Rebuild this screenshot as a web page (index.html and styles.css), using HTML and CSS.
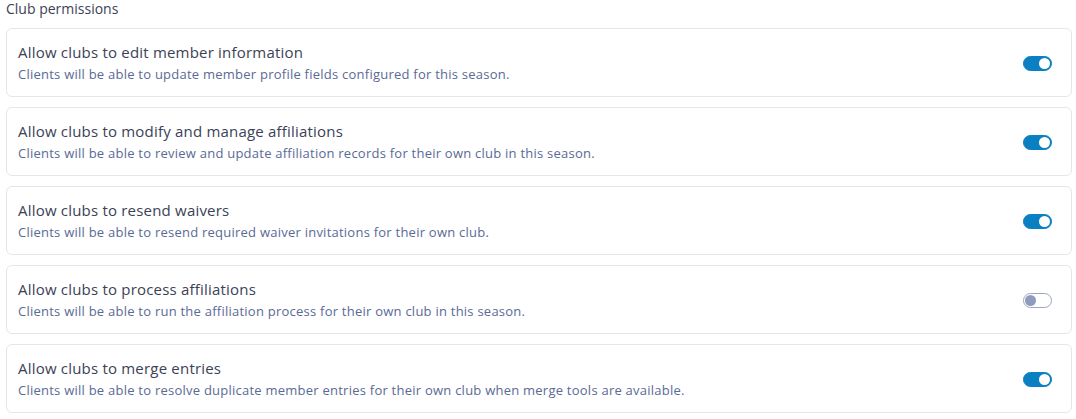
FILE: index.html
```html
<!DOCTYPE html>
<html lang="en">
<head>
  <meta charset="UTF-8" />
  <title>Club permissions</title>
  <link rel="stylesheet" href="styles.css">
</head>
<body>

  <section class="permissions">
    <h2 class="section-title">Club permissions</h2>

    <div class="perm-card">
      <div class="perm-text">
        <h3>Allow clubs to edit member information</h3>
        <p>Clients will be able to update member profile fields configured for this season.</p>
      </div>
      <label class="switch"><input type="checkbox" checked><span class="slider"></span></label>
    </div>

    <div class="perm-card">
      <div class="perm-text">
        <h3>Allow clubs to modify and manage affiliations</h3>
        <p>Clients will be able to review and update affiliation records for their own club in this season.</p>
      </div>
      <label class="switch"><input type="checkbox" checked><span class="slider"></span></label>
    </div>

    <div class="perm-card">
      <div class="perm-text">
        <h3>Allow clubs to resend waivers</h3>
        <p>Clients will be able to resend required waiver invitations for their own club.</p>
      </div>
      <label class="switch"><input type="checkbox" checked><span class="slider"></span></label>
    </div>

    <div class="perm-card">
      <div class="perm-text">
        <h3>Allow clubs to process affiliations</h3>
        <p>Clients will be able to run the affiliation process for their own club in this season.</p>
      </div>
      <label class="switch"><input type="checkbox"><span class="slider"></span></label>
    </div>

    <div class="perm-card">
      <div class="perm-text">
        <h3>Allow clubs to merge entries</h3>
        <p>Clients will be able to resolve duplicate member entries for their own club when merge tools are available.</p>
      </div>
      <label class="switch"><input type="checkbox" checked><span class="slider"></span></label>
    </div>
  </section>

</body>
</html>
```
FILE: styles.css
```css
/* Basic Reset */
* {
  margin: 0;
  padding: 0;
  box-sizing: border-box;
}

body {
  font-family: "Open Sans", Lato, sans-serif;
  background-color: #ffffff;
  color: #3b4256;
  padding: 0 4px 0 6px;
}

/* Section */
.permissions {
  display: flex;
  flex-direction: column;
  gap: 10px;
}

.section-title {
  font-size: 14px;
  font-weight: 400;
  line-height: 18px;
  color: #3b4256;
}

/* Permission cards */
.perm-card {
  display: flex;
  align-items: center;
  justify-content: space-between;
  border: 1px solid #e4e6eb;
  border-radius: 6px;
  padding: 13px 19px 12px 11px;
  height: 69px;
}

.perm-text h3 {
  font-size: 15px;
  font-weight: 400;
  line-height: 20px;
  letter-spacing: 0.2px;
  color: #3b4256;
}

.perm-text p {
  font-size: 13px;
  line-height: 22px;
  margin-top: 1px;
  letter-spacing: 0.24px;
  color: #5a6a96;
}

/* Toggle switch */
.switch {
  position: relative;
  display: inline-block;
  width: 29px;
  height: 15px;
  flex-shrink: 0;
}

.switch input {
  display: none;
}

.slider {
  position: absolute;
  inset: 0;
  border-radius: 8px;
  background-color: #ffffff;
  border: 1px solid #9ba5c2;
  cursor: pointer;
}

.slider::before {
  content: "";
  position: absolute;
  top: 1px;
  left: 1px;
  width: 11px;
  height: 11px;
  border-radius: 50%;
  background-color: #8f9bbd;
}

.switch input:checked + .slider {
  background-color: #0a7fc2;
  border-color: #0a7fc2;
}

.switch input:checked + .slider::before {
  left: auto;
  right: 1px;
  background-color: #ffffff;
}
```
